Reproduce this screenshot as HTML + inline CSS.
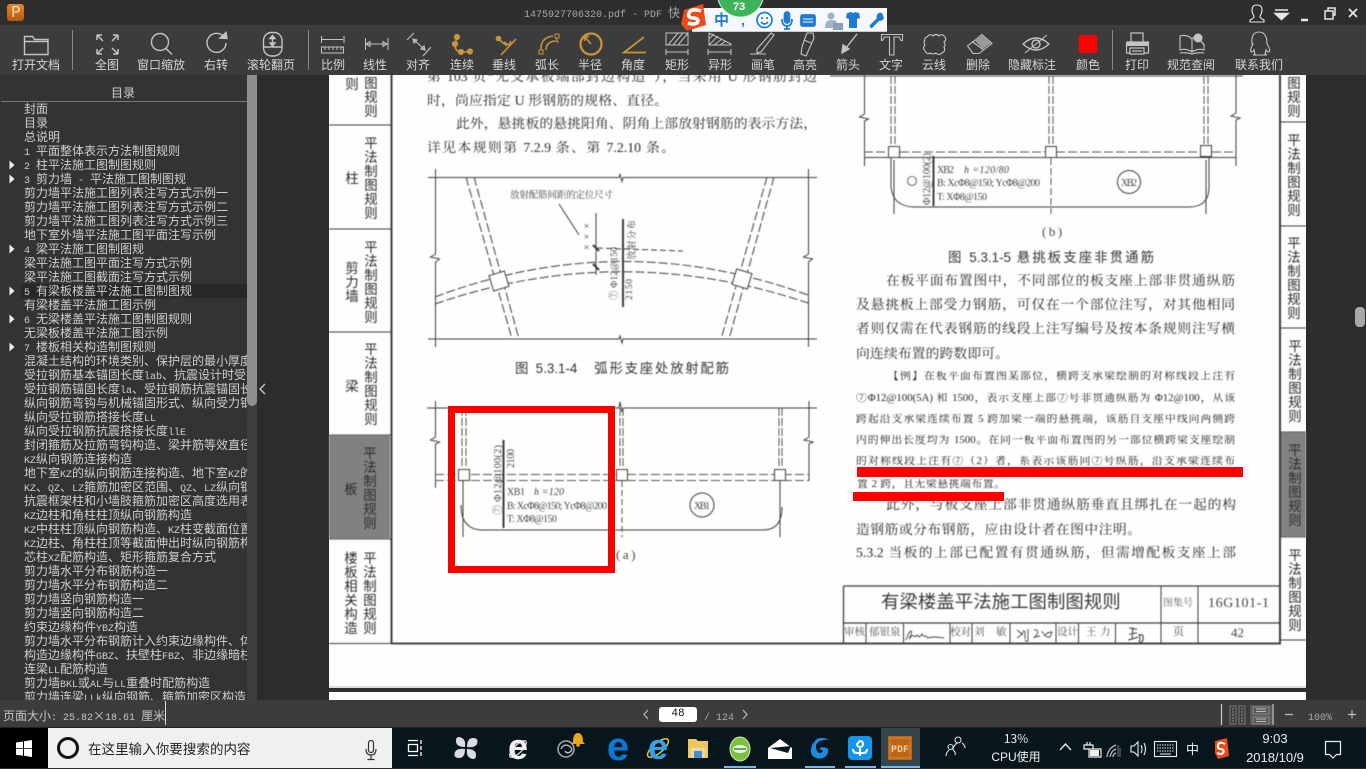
<!DOCTYPE html>
<html lang="zh">
<head>
<meta charset="utf-8">
<title>PDF</title>
<style>
html,body{margin:0;padding:0;width:1366px;height:768px;overflow:hidden;background:#2c2c2c}
*{box-sizing:border-box}
div{position:absolute}
tt{font:10px "Liberation Mono",monospace}
.ui{font-family:"WenQuanYi Zen Hei","Noto Sans CJK SC",sans-serif}
#pg{left:0;top:0;width:1366px;height:768px;filter:blur(.4px);color:#333;font-family:"Liberation Serif","Noto Serif CJK SC",serif}
.l{text-align:justify;text-align-last:justify;line-height:1;height:16px;overflow:hidden;font-size:13.8px;color:#2a2a2a}
.s{font-size:10.8px;color:#222;height:13px}
.f{white-space:nowrap;line-height:1;font-size:13.6px;color:#2e2e2e}
.c{white-space:nowrap;line-height:1;font-family:"Liberation Sans","Noto Sans CJK SC",sans-serif;color:#333}
.v{width:16px;font-size:13.4px;line-height:14.1px;text-align:center;word-break:break-all;color:#2a2a2a;font-family:"Noto Sans CJK SC",sans-serif}
.b{top:58px;width:70px;margin-left:-35px;text-align:center;font-size:12px;line-height:14px;color:#d6d6d6;white-space:nowrap}
#side div{left:24px;white-space:nowrap;font-size:12px;line-height:14px;color:#cfcfcf;height:14px}
.st{font-size:12px;line-height:14px;color:#c4c4c4;white-space:nowrap}
svg{position:absolute;left:0;top:0;overflow:visible}
</style>
</head>
<body>

<!-- PDF page -->
<div style="left:329px;top:75px;width:977px;height:625px;background:#fefefe"></div>
<div style="left:257px;top:75px;width:72px;height:625px;background:#2c2c2c"></div>
<div id="pg">
<svg width="1366" height="768" fill="none" stroke="#3c3c3c" stroke-width="1">
<!-- tab frame -->
<path d="M391.5 70V644" stroke-width="2"/>
<path d="M391 643.5H1281" stroke-width="2" stroke="#444"/>
<path d="M329 643.5H391M329 125H391M329 229H391M329 332H391M329 435H391M329 539H391"/>
<rect x="329" y="435" width="61" height="104" fill="#818181" stroke="none"/>
<path d="M1280 75V644" stroke-width="2"/>
<path d="M1280 122H1306M1280 226H1306M1280 328H1306M1280 432H1306M1280 537H1306M1280 640H1306"/>
<rect x="1281" y="432" width="25" height="105" fill="#818181" stroke="none"/>

<!-- fig 5.3.1-4 -->
<path d="M428 177.5H619l1-3 2 7 1-4H817M428 339H619l1-3 2 7 1-4H817"/>
<path d="M435.5 169V254l-5 3 9 2-4 3V347M808.5 169V254l-5 3 9 2-4 3V347"/>
<g stroke-dasharray="9 3">
<path d="M435 297Q620 227 808 295"/>
<path d="M435 304Q620 240 808 303"/>
<path d="M466 177L512 339M474 177L519 339"/>
<path d="M767 177L721 339M774 177L729 339"/>
<path d="M597 248L683 251" stroke-dasharray="6 3"/>
</g>
<rect x="491" y="273" width="16" height="16" fill="#fff" transform="rotate(-17 499 281)"/>
<rect x="734" y="271" width="16" height="16" fill="#fff" transform="rotate(17 742 279)"/>
<path d="M559 204L579 235M596 213V275"/>
<path d="M593 245l6 6M593 264l6 6" stroke-width="2.2"/>
<path d="M623 219V307" stroke-width="2"/>
<g fill="#444" stroke="none" font-family="Liberation Serif,Noto Serif CJK SC,serif">
<text x="510" y="198" font-size="9.5" textLength="103">放射配筋间距的定位尺寸</text>
<text transform="translate(590 250) rotate(-90)" font-size="10" textLength="27">×××</text>
<text transform="translate(617 300) rotate(-90)" font-size="9.5" textLength="53">⑦ Φ12@150</text>
<text transform="translate(632 300) rotate(-90)" font-size="9.5" textLength="21">2150</text>
<text transform="translate(635 260) rotate(-90)" font-size="9.5" textLength="40">放射分布</text>
</g>

<!-- fig a -->
<path d="M427 408H619l1-6 2 10 1-4H817"/>
<path d="M435.5 401V437l-5 3 9 2-4 2V488M809 401V437l-5 3 9 2-4 2V481"/>
<g stroke-dasharray="8 2" stroke="#555">
<path d="M462 408V468M466 408V468M620 408V468M623 408V468M779 408V468M782 408V468"/>
<path d="M435 474.5H809M435 480.5H809" stroke-dasharray="9 3"/>
<path d="M622 481V537" stroke-dasharray="6 3"/>
</g>
<rect x="458.5" y="469.5" width="11" height="11" fill="#fff"/>
<rect x="616.5" y="469.5" width="11" height="11" fill="#fff"/>
<rect x="774.5" y="469.5" width="11" height="11" fill="#fff"/>
<path d="M461 505Q461 530 483 530H763Q782 530 782 507M463 481V537M780 481V537"/>
<path d="M503.5 440V528" stroke-width="2"/>
<circle cx="702" cy="505" r="12"/>
<g fill="#444" stroke="none" font-family="Liberation Serif,Noto Serif CJK SC,serif" font-size="10">
<text transform="translate(501 515) rotate(-90)" textLength="70">⑦ Φ12@100(2)</text>
<text transform="translate(514 468) rotate(-90)" textLength="19">2100</text>
<text x="507" y="495" textLength="18">XB1</text>
<text x="534" y="495" font-style="italic" textLength="30">h =120</text>
<text x="507" y="509" textLength="100">B: XcΦ8@150; YcΦ8@200</text>
<text x="507" y="522" textLength="50">T: XΦ8@150</text>
<text x="694" y="509" textLength="16">XB1</text>
<text x="616" y="559" font-size="13" letter-spacing="2.5">(a)</text>
</g>

<!-- fig b -->
<path d="M830 76H1243"/>
<path d="M864.5 75V114l-5 3 9 2-4 2V166M1236 75V113l-5 3 9 2-4 2V166"/>
<g stroke-dasharray="8 2" stroke="#555">
<path d="M891 76V146M895 76V146M1049 76V146M1053 76V146M1204 76V146M1208 76V146"/>
<path d="M864 152H1236" stroke-dasharray="9 3"/>
<path d="M1051 158V214" stroke-dasharray="7 3"/>
</g>
<path d="M864 157.5H1236"/>
<rect x="888.5" y="146.5" width="11" height="11" fill="#fff"/>
<rect x="1045.5" y="146.5" width="11" height="11" fill="#fff"/>
<rect x="1200.5" y="145.5" width="11" height="11" fill="#fff"/>
<path d="M891 157V187Q893 207 915 207H1189Q1209 207 1209 187V157M894 160V214M1206 160V214"/>
<path d="M933.5 156V206" stroke-width="2"/>
<circle cx="1129" cy="182" r="11.5"/>
<circle cx="912" cy="181" r="4.5" stroke-width=".8"/>
<g fill="#444" stroke="none" font-family="Liberation Serif,Noto Serif CJK SC,serif" font-size="10">
<text transform="translate(930 205) rotate(-90)" textLength="52">Φ12@100(2)</text>
<text x="937" y="173" textLength="17">XB2</text>
<text x="964" y="173" font-style="italic" textLength="45">h =120/80</text>
<text x="937" y="186" textLength="103">B: XcΦ8@150; YcΦ8@200</text>
<text x="937" y="200" textLength="50">T: XΦ8@150</text>
<text x="1121" y="186" textLength="16">XB2</text>
<text x="1042" y="236" font-size="13" letter-spacing="2.5">(b)</text>
</g>

<!-- title block -->
<path d="M843.5 586H1281M843.5 586V643M843 623H1280" stroke-width="1.3"/>
<path d="M1161 586V643M1198 586V643M866 623V643M903.5 623V643M950 623V643M972 623V643M1010 623V643M1056 623V643M1078.5 623V643M1115.5 623V643"/>
<path d="M906 640q3-9 5-9t-2 8q4-5 5-3t3-1q2 4 5-1q1 3 4 2l2 2q3-1 6-1t10 1M1017 630l6 5m-6 3q5-3 7-8m1 1v8m3-10v12q-2 1-3-1M1034 630q5-1 3 4t-3 3q5-1 6-1m2-5q3 7 8 6l2-5q-4 0-7 3" stroke-width=".9"/>
<path d="M1129 628l8 1m-4-2l-1 11m-3-4l8-1m-9 7q5-1 10-3m1-3q2 5 0 8m1-7q4-1 3 4t-3 3" stroke-width="1.1"/>
</svg>

<!-- tabs left -->
<div class="v" style="left:344px;top:76px">则</div>
<div class="v" style="left:363px;top:75px">图规则</div>
<div class="v" style="left:344px;top:170px">柱</div>
<div class="v" style="left:363px;top:135px">平法制图规则</div>
<div class="v" style="left:344px;top:260px">剪力墙</div>
<div class="v" style="left:363px;top:239px">平法制图规则</div>
<div class="v" style="left:344px;top:378px">梁</div>
<div class="v" style="left:363px;top:341px">平法制图规则</div>
<div class="v" style="left:343px;top:481px">板</div>
<div class="v" style="left:362px;top:445px">平法制图规则</div>
<div class="v" style="left:343px;top:550px">楼板相关构造</div>
<div class="v" style="left:362px;top:550px">平法制图规则</div>
<!-- tabs right -->
<div class="v" style="left:1286px;top:75px">图规则</div>
<div class="v" style="left:1286px;top:132px">平法制图规则</div>
<div class="v" style="left:1286px;top:235px">平法制图规则</div>
<div class="v" style="left:1287px;top:338px">平法制图规则</div>
<div class="v" style="left:1287px;top:442px">平法制图规则</div>
<div class="v" style="left:1287px;top:547px">平法制图规则</div>

<!-- left column text -->
<div class="l" style="left:427px;top:70px;width:390px">第 103 页“无支承板端部封边构造”），当采用 U 形钢筋封边</div>
<div class="l" style="left:427px;top:94px;width:241px">时，尚应指定 U 形钢筋的规格、直径。</div>
<div class="l" style="left:456px;top:117px;width:361px">此外，悬挑板的悬挑阳角、阴角上部放射钢筋的表示方法，</div>
<div class="l" style="left:427px;top:141px;width:248px">详见本规则第 7.2.9 条、第 7.2.10 条。</div>
<div class="c" style="left:515px;top:362px;font-size:13.4px;width:214px;text-align:justify;text-align-last:justify;height:16px">图 5.3.1-4　弧形支座处放射配筋</div>

<!-- right column text -->
<div class="c" style="left:948px;top:251px;font-size:13.4px;width:206px;text-align:justify;text-align-last:justify;height:16px">图 5.3.1-5 悬挑板支座非贯通筋</div>
<div class="l" style="left:886px;top:274px;width:349px">在板平面布置图中，不同部位的板支座上部非贯通纵筋</div>
<div class="l" style="left:856px;top:298px;width:379px">及悬挑板上部受力钢筋，可仅在一个部位注写，对其他相同</div>
<div class="l" style="left:856px;top:322px;width:379px">者则仅需在代表钢筋的线段上注写编号及按本条规则注写横</div>
<div class="l" style="left:856px;top:347px;width:153px">向连续布置的跨数即可。</div>
<div class="l s" style="left:888px;top:371px;width:347px">【例】在板平面布置图某部位，横跨支承梁绘制的对称线段上注有</div>
<div class="l s" style="left:856px;top:393px;width:379px">⑦Φ12@100(5A) 和 1500，表示支座上部⑦号非贯通纵筋为 Φ12@100，从该</div>
<div class="l s" style="left:856px;top:414px;width:379px">跨起沿支承梁连续布置 5 跨加梁一端的悬挑端，该筋自支座中线向两侧跨</div>
<div class="l s" style="left:856px;top:435px;width:379px">内的伸出长度均为 1500。在同一板平面布置图的另一部位横跨梁支座绘制</div>
<div class="l s" style="left:856px;top:456px;width:379px">的对称线段上注有⑦（2）者，系表示该筋同⑦号纵筋，沿支承梁连续布</div>
<div class="l s" style="left:857px;top:479px;width:148px">置 2 跨，且无梁悬挑端布置。</div>
<div class="l" style="left:886px;top:498px;width:350px">此外，与板支座上部非贯通纵筋垂直且绑扎在一起的构</div>
<div class="l" style="left:856px;top:523px;width:285px">造钢筋或分布钢筋，应由设计者在图中注明。</div>
<div class="l" style="left:856px;top:546px;width:380px">5.3.2 当板的上部已配置有贯通纵筋，但需增配板支座上部</div>

<!-- title block text -->
<div class="c" style="left:881px;top:593px;font-size:18.4px;letter-spacing:.05px;color:#3a3a3a">有梁楼盖平法施工图制图规则</div>
<div class="f" style="left:1163px;top:599px;font-size:10px;color:#666">图集号</div>
<div class="f" style="left:1208px;top:597px;font-size:14px;color:#444;letter-spacing:.6px">16G101-1</div>
<div class="f" style="left:844px;top:628px;font-size:10.5px;color:#555">审核</div>
<div class="f" style="left:869px;top:628px;font-size:10.5px;color:#555">郁银泉</div>
<div class="f" style="left:950px;top:628px;font-size:10.5px;color:#555">校对</div>
<div class="f" style="left:974px;top:628px;font-size:10.5px;color:#555;word-spacing:0">刘</div>
<div class="f" style="left:996px;top:628px;font-size:10.5px;color:#555">敏</div>
<div class="f" style="left:1057px;top:628px;font-size:10.5px;color:#555">设计</div>
<div class="f" style="left:1086px;top:628px;font-size:10.5px;color:#555">王</div>
<div class="f" style="left:1100px;top:628px;font-size:10.5px;color:#555">力</div>
<div class="f" style="left:1173px;top:627px;font-size:11px;color:#444">页</div>
<div class="f" style="left:1231px;top:626px;font-size:13px;color:#444">42</div>
</div>

<!-- page bottom band -->
<div style="left:329px;top:686px;width:977px;height:2px;background:#ddd"></div>
<div style="left:329px;top:688px;width:977px;height:4px;background:#2f2f2f"></div>
<div style="left:329px;top:692px;width:977px;height:8px;background:#fff"></div>

<!-- red annotations -->
<div style="left:448px;top:406px;width:167px;height:167px;border:7px solid #f00"></div>
<div style="left:857px;top:467px;width:386px;height:10px;background:#f00"></div>
<div style="left:853px;top:492px;width:151px;height:9px;background:#f00"></div>

<!-- sidebar -->
<div style="left:0;top:75px;width:247px;height:625px;background:#333"></div>
<div style="left:247px;top:75px;width:10px;height:625px;background:#3d3d3d"></div>
<div style="left:247px;top:75px;width:10px;height:331px;background:#8f8f8f;border-radius:0 0 5px 5px"></div>
<div style="left:1px;top:101px;width:246px;height:1px;background:#7a7a7a"></div>
<div class="ui st" style="left:111px;top:86px;color:#cfcfcf">目录</div>
<div style="left:21px;top:284px;width:226px;height:14px;background:#282828"></div>
<div id="side" class="ui" style="left:0;top:102px;width:247px;height:598px;overflow:hidden">
<div style="top:0">封面</div>
<div style="top:14px">目录</div>
<div style="top:28px">总说明</div>
<div style="top:42px"><tt>1 </tt>平面整体表示方法制图规则</div>
<div style="top:56px"><tt>2 </tt>柱平法施工图制图规则</div>
<div style="top:70px"><tt>3 </tt>剪力墙<tt> - </tt>平法施工图制图规</div>
<div style="top:84px">剪力墙平法施工图列表注写方式示例一</div>
<div style="top:98px">剪力墙平法施工图列表注写方式示例二</div>
<div style="top:112px">剪力墙平法施工图列表注写方式示例三</div>
<div style="top:126px">地下室外墙平法施工图平面注写示例</div>
<div style="top:140px"><tt>4 </tt>梁平法施工图制图规</div>
<div style="top:154px">梁平法施工图平面注写方式示例</div>
<div style="top:168px">梁平法施工图截面注写方式示例</div>
<div style="top:182px"><tt>5 </tt>有梁板楼盖平法施工图制图规</div>
<div style="top:196px">有梁楼盖平法施工图示例</div>
<div style="top:210px"><tt>6 </tt>无梁楼盖平法施工图制图规则</div>
<div style="top:224px">无梁板楼盖平法施工图示例</div>
<div style="top:238px"><tt>7 </tt>楼板相关构造制图规则</div>
<div style="top:252px">混凝土结构的环境类别、保护层的最小厚度</div>
<div style="top:266px">受拉钢筋基本锚固长度<tt>lab</tt>、抗震设计时受拉</div>
<div style="top:280px">受拉钢筋锚固长度<tt>la</tt>、受拉钢筋抗震锚固长度</div>
<div style="top:294px">纵向钢筋弯钩与机械锚固形式、纵向受力钢筋</div>
<div style="top:308px">纵向受拉钢筋搭接长度<tt>LL</tt></div>
<div style="top:322px">纵向受拉钢筋抗震搭接长度<tt>llE</tt></div>
<div style="top:336px">封闭箍筋及拉筋弯钩构造、梁并筋等效直径</div>
<div style="top:350px"><tt>KZ</tt>纵向钢筋连接构造</div>
<div style="top:364px">地下室<tt>KZ</tt>的纵向钢筋连接构造、地下室<tt>KZ</tt>的</div>
<div style="top:378px"><tt>KZ</tt>、<tt>QZ</tt>、<tt>LZ</tt>箍筋加密区范围、<tt>QZ</tt>、<tt>LZ</tt>纵向钢筋</div>
<div style="top:392px">抗震框架柱和小墙肢箍筋加密区高度选用表</div>
<div style="top:406px"><tt>KZ</tt>边柱和角柱柱顶纵向钢筋构造</div>
<div style="top:420px"><tt>KZ</tt>中柱柱顶纵向钢筋构造、<tt>KZ</tt>柱变截面位置</div>
<div style="top:434px"><tt>KZ</tt>边柱、角柱柱顶等截面伸出时纵向钢筋构造</div>
<div style="top:448px">芯柱<tt>XZ</tt>配筋构造、矩形箍筋复合方式</div>
<div style="top:462px">剪力墙水平分布钢筋构造一</div>
<div style="top:476px">剪力墙水平分布钢筋构造二</div>
<div style="top:490px">剪力墙竖向钢筋构造一</div>
<div style="top:504px">剪力墙竖向钢筋构造二</div>
<div style="top:518px">约束边缘构件<tt>YBZ</tt>构造</div>
<div style="top:532px">剪力墙水平分布钢筋计入约束边缘构件、体积</div>
<div style="top:546px">构造边缘构件<tt>GBZ</tt>、扶壁柱<tt>FBZ</tt>、非边缘暗柱</div>
<div style="top:560px">连梁<tt>LL</tt>配筋构造</div>
<div style="top:574px">剪力墙<tt>BKL</tt>或<tt>AL</tt>与<tt>LL</tt>重叠时配筋构造</div>
<div style="top:588px">剪力墙连梁<tt>LLk</tt>纵向钢筋、箍筋加密区构造</div>
</div>
<svg width="1366" height="768" fill="none">
<g fill="#eee">
<path d="M9.5 160.5l5 4.5-5 4.5zM9.5 174.5l5 4.5-5 4.5zM9.5 244.5l5 4.5-5 4.5zM9.5 286.5l5 4.5-5 4.5zM9.5 314.5l5 4.5-5 4.5zM9.5 342.5l5 4.5-5 4.5z"/>
</g>
<path d="M265 384l-5 5 5 5" stroke="#ccc" stroke-width="1.3"/>
<!-- viewer scrollbar -->
<rect x="1355" y="307" width="10" height="20" rx="4" fill="#a8a8a8"/>
</svg>

<!-- title bar + toolbar -->
<div style="left:0;top:0;width:1366px;height:25px;background:#2e2e2e"></div>
<div style="left:0;top:25px;width:1366px;height:50px;background:#3c3c3c"></div>
<div style="left:7px;top:4px;width:17px;height:17px;border-radius:3px;background:linear-gradient(#e8862a,#b25a12)"></div>
<div class="ui" style="left:11px;top:4px;color:#f6e3c8;font-size:15px;line-height:16px">P</div>
<div class="ui st" style="left:524px;top:6px;color:#a8a8a8"><tt>1475927706320.pdf - PDF </tt>快</div>

<svg width="1366" height="768" fill="none" stroke="#c4c4c4" stroke-width="1.4">
<!-- separators -->
<path d="M72.5 30V70M308.5 30V70M1112.5 30V70" stroke="#8a8a8a" stroke-width="1"/>
<!-- folder -->
<path d="M24.5 36.5h8l2 3h13.5v15h-23.5zM24.5 41.5h23.5"/>
<!-- fit -->
<path d="M97 35l6 6M97 35h5M97 35v5M118 35l-6 6M118 35h-5M118 35v5M97 54l6-6M97 54h5M97 54v-5M118 54l-6-6M118 54h-5M118 54v-5" stroke-width="1.5"/>
<!-- zoom -->
<circle cx="160" cy="42" r="8.5"/><path d="M166 48.500l6 6"/>
<!-- rotate -->
<path d="M224 37a9.500 9.500 0 1 0 2 6"/><path d="M220 38l7 .5-1-6z" fill="#c4c4c4"/>
<!-- mouse -->
<rect x="263.500" y="32.500" width="18.500" height="23.500" rx="8"/><path d="M264 47H282M272.500 37v8" /><path d="M270 38.500l2.500-3 2.500 3zM270 43l2.500 3 2.500-3z" fill="#c4c4c4"/>
<!-- ratio -->
<path d="M321.500 36v7M344 36v7M322 39.500h21M321.500 47h22v6h-22zM325 47v3M329 47v3M333 47v3M337 47v3M341 47v3" stroke-width="1"/>
<!-- linear -->
<path d="M365.500 38v12M388 38v12M366 44h21M366 44l4-2.500v5zM387 44l-4-2.500v5z" stroke-width="1"/>
<!-- aligned -->
<path d="M407 40l7-7M423 56l8-9M413 39l12 11M413 39l1 4 3-3zM425 50l-1-4-3 3z" stroke-width="1.1"/>
<!-- orange measure -->
<g stroke="#c8953a" fill="#c8953a" stroke-width="1.6">
<path fill="none" d="M457 37L455 44Q455 52 461 52H470"/>
<circle cx="457" cy="37" r="2.300"/><circle cx="455" cy="44" r="2.300"/><circle cx="461" cy="52" r="2.300"/><circle cx="470" cy="51.500" r="2.300"/>
<path fill="none" d="M516 39L501 55M496 37L507 46M504 42l5 3 2-4"/><circle cx="498.500" cy="38.500" r="2"/>
<path fill="none" d="M541 50Q540 38 553 36M546 50Q546 42 555 41" stroke-width="1.500"/>
<path fill="none" stroke-width="1" d="M539 50h4v4h-4zM555 34h4v4h-4zM556 38l2 4-3-1"/>
<circle cx="591" cy="44" r="10.500" fill="none" stroke-width="2.200"/><path fill="none" d="M591 44L585 37M584.500 41v-4.500h4.500"/>
<path fill="none" stroke-width="1.800" d="M644 37L624 52.500H646"/>
</g>
<!-- rect hatch -->
<g stroke-width="1">
<path d="M666 33h22v12h-22zM668 45l10-12M673 45l10-12M678 45l10-12M666 52h22M666 49v6M688 49v6"/>
<path d="M709 33l22 11v1h-22zM709 39l5-5M709 45l9-9M714 45l8-6M720 45l6-4M708 52h23M708 49v6M731 49v6"/>
</g>
<!-- pencil -->
<path d="M771 33l3 2-13 17-4 1 0-4zM750 54H766" stroke-width="1.100"/>
<!-- marker -->
<path d="M807 33h6l1 5-8 18-5-2 1-7 3-9zM804 40l7 3" stroke-width="1.100"/>
<!-- arrow -->
<path d="M857 34L846 48"/><path d="M842 53l1-8 6 4z" fill="#c4c4c4"/>
<!-- T -->
<path d="M881.500 34.500h21v6h-1.500l-2-3.500h-5v18h-4.500v-18h-5l-2 3.500h-1z" stroke-width="1.100"/>
<!-- cloud -->
<path d="M927 37q3-4 6-1q3-3 6 0q3-3 6 1q2 3-1 5q2 3 0 5q2 4-2 6q-3 3-6 0q-3 2-6 0q-3 2-5-2q-3-3 0-6q-2-3 0-5q-1-2 2-3z" stroke-width="1.100"/>
<!-- eraser -->
<path d="M967.500 46L982 34.500l10 9-13 10h-6zM972 41.500l11 8" stroke-width="1.100"/><path d="M974 40l8-5.500 9 8.500-8 6z" fill="#9a9a9a" stroke="none"/>
<!-- eye -->
<path d="M1023 44q13-12 26 0q-13 12-26 0z"/><circle cx="1036" cy="44" r="4"/><path d="M1025 53L1047 35" stroke-width="1.100"/>
<!-- printer -->
<path d="M1131 42v-9h12v9M1126.500 42h22v11h-4M1130 53h-3.500V42M1130 48h14v6h-14zM1132 51h10" stroke-width="1.200"/><path d="M1126.500 42h22v4h-22z" fill="#c4c4c4" stroke="none"/>
<!-- book -->
<path d="M1192 52q-6-4-12-2V36q7-2 12 3q3-3 4-3M1192 39v13q6-4 12-2v-6M1180 53q6-1 12 1q6-2 12-1" stroke-width="1.100"/><circle cx="1198" cy="38" r="4.500" fill="#c4c4c4" stroke="none"/><path d="M1201 41l3 4"/>
<!-- qq -->
<path d="M1252 44q-1-12 7-12t8 12q4 6 2 8-2 0-3-2l-1 4 2 1h-14l2-1-1-4q-1 2-3 2-1-3 2-8z" stroke-width="1.100"/>
<!-- win ctrl -->
<path d="M1257 5q5 0 5 5c0 4-2 5-2 7q0 1 4 3v2h-14v-2q4-2 4-3c0-2-2-3-2-7q0-5 5-5z" stroke="#e6e6e6" stroke-width="1.100"/>
<path d="M1275 10h13M1275 13.500l6.500 6 6.500-6z" stroke="#e6e6e6" fill="#e6e6e6" stroke-width="1.500"/>
<path d="M1301 20h7" stroke="#e6e6e6" stroke-width="2.500"/>
<path d="M1325 11h8v8h-8zM1328 11v-3h7v7h-2" stroke="#e6e6e6" stroke-width="1.500"/>
<path d="M1349 9l8 8M1357 9l-8 8" stroke="#e6e6e6" stroke-width="1.800"/>
</svg>
<div style="left:1079px;top:35px;width:18px;height:18px;background:#f00;border-radius:2px"></div>

<div class="ui b" style="left:36px">打开文档</div>
<div class="ui b" style="left:107px">全图</div>
<div class="ui b" style="left:161px">窗口缩放</div>
<div class="ui b" style="left:216px">右转</div>
<div class="ui b" style="left:271px">滚轮翻页</div>
<div class="ui b" style="left:333px">比例</div>
<div class="ui b" style="left:375px">线性</div>
<div class="ui b" style="left:418px">对齐</div>
<div class="ui b" style="left:462px">连续</div>
<div class="ui b" style="left:504px">垂线</div>
<div class="ui b" style="left:547px">弧长</div>
<div class="ui b" style="left:590px">半径</div>
<div class="ui b" style="left:633px">角度</div>
<div class="ui b" style="left:677px">矩形</div>
<div class="ui b" style="left:720px">异形</div>
<div class="ui b" style="left:763px">画笔</div>
<div class="ui b" style="left:805px">高亮</div>
<div class="ui b" style="left:848px">箭头</div>
<div class="ui b" style="left:891px">文字</div>
<div class="ui b" style="left:934px">云线</div>
<div class="ui b" style="left:978px">删除</div>
<div class="ui b" style="left:1032px">隐藏标注</div>
<div class="ui b" style="left:1088px">颜色</div>
<div class="ui b" style="left:1137px">打印</div>
<div class="ui b" style="left:1191px">规范查阅</div>
<div class="ui b" style="left:1259px">联系我们</div>

<!-- IME bar -->
<div style="left:692px;top:8px;width:195px;height:24px;background:#f6f8fb;border-bottom:1px solid #ccc"></div>
<svg width="1366" height="768" fill="none">
<circle cx="740.500" cy="-6" r="23" fill="#3fb35a" stroke="#d8efdc" stroke-width="1"/>
<path d="M684 10l19-6 3 21-19 6-6-7z" fill="#ee4a1c"/>
<path d="M701 11q-10-3-12 2t5 5q6 1 3 5-4 2-9 0" stroke="#fff" stroke-width="3.500"/>
<g stroke="#1f7bd0" stroke-width="1.700">
<circle cx="764.500" cy="20" r="7.500"/><path d="M761 22q3.500 4 7 0M762 17v2M767 17v2"/>
<rect x="784.500" y="12" width="5" height="11" rx="2.500" fill="#1f7bd0"/><path d="M782 19q0 7 5 7t5-7M787 26v3M784 29h6"/>
<rect x="801" y="15" width="14" height="11" rx="1.500" fill="#1f7bd0"/><path d="M803 19h10M803 22h10" stroke="#fff" stroke-width="1"/>
</g>
<circle cx="831" cy="16" r="3.500" fill="#9fb3c8"/><path d="M825 28q0-8 6-8t6 3v5z" fill="#9fb3c8"/><rect x="833" y="23" width="10" height="7" fill="#8ba0b6"/>
<path d="M847 13l4-1q2 2 4 0l4 1 1 5-3 1v9h-8v-9l-3-1z" fill="#1f7bd0"/>
<path d="M882 13q-4-1-5 2t0 3l-7 7q-1 3 2 3l7-7q4 0 5-3z" fill="#1f7bd0"/>
</svg>
<div style="left:714px;top:12px;font:bold 15px/16px 'Noto Sans CJK SC',sans-serif;color:#1f7bd0">中</div>
<div style="left:741px;top:12px;font:bold 14px/16px 'Liberation Sans',sans-serif;color:#1f7bd0">,</div>
<div style="left:733px;top:1px;font:bold 11px/13px 'Liberation Sans',sans-serif;color:#fff">73</div>

<!-- status bar -->
<div style="left:0;top:700px;width:1366px;height:27px;background:#3c3c3c"></div>
<div style="left:0;top:727px;width:1366px;height:1px;background:#222"></div>
<div class="ui st" style="left:3px;top:709px">页面大小<tt>: 25.82</tt>×<tt>18.61 </tt>厘米</div>
<div style="left:165px;top:701px;width:1px;height:24px;background:#ddd"></div>
<div style="left:659px;top:707px;width:38px;height:15px;background:#fff;border-radius:3px;text-align:center;font:11px/15px 'Liberation Mono',monospace;color:#111">48</div>
<div class="ui st" style="left:704px;top:709px;color:#aaa"><tt>/ 124</tt></div>
<div class="ui st" style="left:1308px;top:709px;color:#aaa"><tt>100%</tt></div>
<svg width="1366" height="768" fill="none" stroke="#bbb" stroke-width="1.200">
<path d="M648 710l-4 4.500 4 4.500M743 710l4 4.500-4 4.500"/>
<path d="M1221.500 704V725M1273 704V725" stroke="#ccc"/>
<rect x="1250" y="705" width="22" height="20" fill="#5a5a5a" stroke="none"/>
<path d="M1230 706h6v18h-6zM1239 706h6v18h-6z" stroke="#777" stroke-width="1"/>
<path d="M1232 709h2M1232 712h2M1232 715h2M1232 718h2M1232 721h2M1241 709h2M1241 712h2M1241 715h2M1241 718h2M1241 721h2" stroke="#999" stroke-width="1"/>
<path d="M1253 707h16v7h-16zM1253 717h16v7h-16z" stroke="#888" stroke-width="1"/>
<path d="M1256 709h10M1256 711.500h10M1256 719h10M1256 721.500h10" stroke="#bbb" stroke-width="1"/>
<path d="M1285 714.500h8M1348 714.500h8M1352 710.500v8"/>
</svg>

<!-- taskbar -->
<div style="left:0;top:728px;width:1366px;height:40px;background:#07161d"></div>
<div style="left:0;top:728px;width:48px;height:40px;background:#000"></div>
<div style="left:48px;top:728px;width:344px;height:40px;background:#f0f0f0"></div>
<div style="left:881px;top:728px;width:39px;height:40px;background:#34454c"></div>
<div style="left:88px;top:740px;font:13.500px/17px 'Noto Sans CJK SC',sans-serif;color:#222;white-space:nowrap;letter-spacing:.05px">在这里输入你要搜索的内容</div>
<div style="left:724px;top:766px;width:32px;height:2px;background:#7fb7ea"></div>
<div style="left:805px;top:766px;width:30px;height:2px;background:#7fb7ea"></div>
<div style="left:845px;top:766px;width:31px;height:2px;background:#7fb7ea"></div>
<div style="left:881px;top:766px;width:39px;height:2px;background:#7fb7ea"></div>
<svg width="1366" height="768" fill="none">
<g fill="#fff"><path d="M16 742.500l7-1v6.800h-7zM24 741.300l8-1.300v8.300h-8zM16 749h7v6.800l-7-1zM24 749h8v8l-8-1.300z"/></g>
<circle cx="68" cy="748" r="9.500" stroke="#111" stroke-width="3"/>
<path d="M368.500 743a2.500 2.500 0 0 1 5 0v7a2.500 2.500 0 0 1-5 0zM366 749q0 6 5 6t5-6M371 755v4M367.500 759.500h7" stroke="#333" stroke-width="1.200"/>
<!-- task view -->
<path d="M408 740.500h10M408.500 744.500h9v7h-9zM408 755.500h10M421 740v4M421 746v4M421 752v4" stroke="#fff" stroke-width="1.300"/>
<!-- fan -->
<g fill="#d7dde0"><path d="M465 747q-9 0-9-6t6-3q4 2 3 9zM467 747q0-9 6-9t4 6q-2 4-10 3zM467 749q9 0 9 6t-6 3q-4-2-3-9zM465 749q0 9-6 9t-4-6q2-4 10-3z"/></g>
<!-- ring e -->
<ellipse cx="518" cy="749" rx="11" ry="4" stroke="#ddd" stroke-width="1.300" transform="rotate(-45 518 749)"/>
<!-- swirl -->
<circle cx="566" cy="749" r="8" stroke="#aaa" stroke-width="1.500"/><path d="M561 749q3-6 8-3t1 6q-3 2-5-1" stroke="#ccc" stroke-width="1.300"/>
<path d="M573 742q0-9 5-9t5 9l2 2h-14z" fill="#e6a91e"/><circle cx="578" cy="745" r="1.800" fill="#e6a91e"/>
<!-- IE ring -->
<ellipse cx="658" cy="748" rx="13" ry="5" stroke="#e6c435" stroke-width="1.500" transform="rotate(-40 658 748)"/>
<!-- folder -->
<path d="M688 739h8l2 2h10v17h-20z" fill="#efc75e"/><path d="M691 748h14v10h-14z" fill="#e9d9a8"/><path d="M694 751h8v7h-8z" fill="#3d8fd0"/>
<!-- green -->
<ellipse cx="740" cy="749" rx="10" ry="12" fill="#7bc043" stroke="#cfe8b0" stroke-width="1"/>
<ellipse cx="740" cy="749" rx="7" ry="4" fill="#e8f5dc"/><path d="M734 749h12" stroke="#3e8e2c" stroke-width="1.500"/>
<!-- mail -->
<path d="M768 748l12-9 12 9v11h-24z" fill="#fff"/><path d="M770 748l18 5 3-7z" fill="#07161d"/>
<!-- G -->
<path d="M830 740q-11-5-16 2t-2 13q4 5 11 3 6-3 5-9-4-3-9-1 2 2 4 3-3 4-6 0-3-7 3-10 5-2 10-1z" fill="#1c8be0"/>
<!-- plus app -->
<rect x="848" y="736" width="24" height="24" rx="4" fill="#1596ea"/>
<path d="M860 741a3 3 0 0 1 0 6h0a3 3 0 0 1-3-3zM860 746v10M853 749q0 4 4 4h6q4 0 4-4" stroke="#fff" stroke-width="2"/>
<!-- PDF -->
<rect x="888" y="736" width="24" height="24" fill="#bf6417"/>
<rect x="890" y="738" width="20" height="20" fill="none" stroke="#d98a3a"/>
<text x="900" y="752" fill="#f0d0a0" font-size="10" font-family="Liberation Mono,monospace" text-anchor="middle" font-weight="bold">PDF</text>
<!-- people -->
<path d="M955 740a3 3 0 1 1 6 0a3 3 0 0 1-6 0zM957 743q-4 3-4 7M962 743q3 2 3 5M948 747a2.500 2.500 0 1 1 5 0a2.500 2.500 0 0 1-5 0zM949 750q-3 3-3 6M953 750q3 2 2 5" stroke="#ddd" stroke-width="1.100"/>
<!-- tray -->
<path d="M1060 750l5.500-6 5.500 6" stroke="#eee" stroke-width="1.300"/>
<path d="M1085 745h2v-3M1090 745v-3M1084 745h9v4h-9zM1089 749h12v8h-12v-8" stroke="#eee" stroke-width="1.200"/><rect x="1090" y="750" width="9" height="6" fill="#eee"/>
<path d="M1107 757q1-9 9-12M1110 757q1-6 6-8M1113 757q0-3 3-4" stroke="#bbb" stroke-width="1.300"/><path d="M1118 745v12M1120 748v9" stroke="#777"/>
<path d="M1131 746h3l4-4v14l-4-4h-3zM1141 745q2 4 0 8M1144 743q3 6 0 12" stroke="#eee" stroke-width="1.100"/>
<rect x="1154.500" y="741.500" width="22" height="15" stroke="#eee" stroke-width="1.100"/>
<path d="M1157 745h17M1157 748h17M1157 751h17" stroke="#eee" stroke-dasharray="1.500 1" stroke-width="1.100"/><path d="M1160 754h11" stroke="#eee"/>
<path d="M1215 741l12-3 2 18-11 3-3-6z" fill="#ea4a1c"/><path d="M1225 744q-6-3-7 1t3 4q4 1 2 4-2 2-6 0" stroke="#fff" stroke-width="2"/>
<path d="M1325.500 741.500h15v13h-4l-3.500 3.500-3.500-3.500h-4z" stroke="#eee" stroke-width="1.200"/>
</svg>
<div style="left:498px;top:727px;font:bold 36px/40px 'Liberation Sans',sans-serif;color:#f0f0f0;width:40px;text-align:center">e</div>
<div style="left:598px;top:727px;font:bold 40px/40px 'Liberation Sans',sans-serif;color:#0a78d7;width:40px;text-align:center">e</div>
<div style="left:638px;top:727px;font:bold 36px/40px 'Liberation Sans',sans-serif;color:#37a0ea;width:40px;text-align:center">e</div>
<div style="left:986px;top:732px;width:60px;text-align:center;font:12px/14px 'Noto Sans CJK SC',sans-serif;color:#eee">13%</div>
<div style="left:986px;top:750px;width:60px;text-align:center;font:12px/14px 'Liberation Sans','Noto Sans CJK SC',sans-serif;color:#eee">CPU使用</div>
<div style="left:1186px;top:741px;font:13px/15px 'Noto Sans CJK SC',sans-serif;color:#eee">中</div>
<div style="left:1245px;top:732px;width:60px;text-align:center;font:13px/14px 'Liberation Sans',sans-serif;color:#eee">9:03</div>
<div style="left:1240px;top:751px;width:70px;text-align:center;font:13px/14px 'Liberation Sans',sans-serif;color:#eee">2018/10/9</div>
</body>
</html>
